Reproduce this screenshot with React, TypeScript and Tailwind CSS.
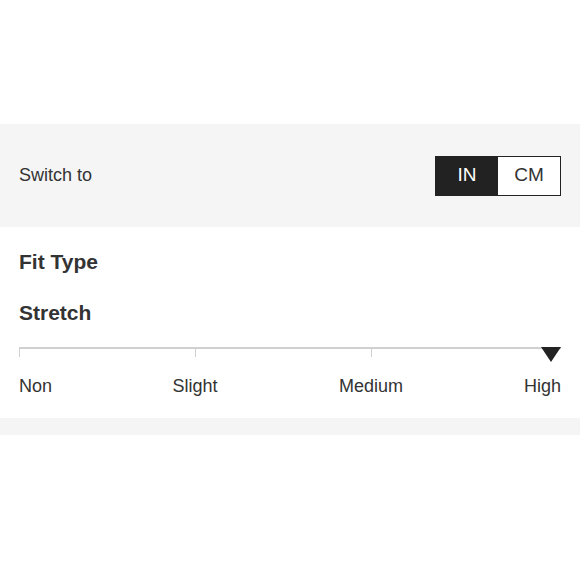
import React from "react";

export default function App() {
  return (
    <div className="w-[580px] h-[580px] bg-white text-[#333] overflow-hidden" style={{ fontFamily: '"Liberation Sans", Arial, sans-serif' }}>
      <div className="h-[124px]" />
      <div className="h-[103px] bg-[#f5f5f5] flex items-center justify-between px-[19px]">
        <span className="text-[18px]">Switch to</span>
        <div className="flex h-[40px] border-[1.5px] border-[#222]">
          <div className="w-[62px] bg-[#222] text-white flex items-center justify-center text-[19px]">IN</div>
          <div className="w-[62px] bg-white text-[#333] flex items-center justify-center text-[19px]">CM</div>
        </div>
      </div>
      <div className="h-[191px] px-[19px] pt-[22px] flex flex-col">
        <div className="text-[21px] font-bold leading-[26px]">Fit Type</div>
        <div className="text-[21px] font-bold leading-[26px] mt-[25px]">Stretch</div>
        <div className="relative mt-[21px] flex h-[10px]">
          <div className="w-[176px] border-t-2 border-l-[1.5px] border-[#d0d0d0]" />
          <div className="w-[176px] border-t-2 border-l-[1.5px] border-[#d0d0d0]" />
          <div className="flex-1 border-t-2 border-l-[1.5px] border-[#d0d0d0]" />
          <svg className="absolute right-0 top-0" width="20" height="15" viewBox="0 0 20 15">
            <polygon points="0,0 20,0 10,15" fill="#222" />
          </svg>
        </div>
        <div className="grid grid-cols-[176px_176px_1fr] mt-[16px] text-[18px] leading-[26px]">
          <span>Non</span>
          <span className="-translate-x-1/2 justify-self-start">Slight</span>
          <div className="flex justify-between">
            <span className="-translate-x-1/2">Medium</span>
            <span>High</span>
          </div>
        </div>
      </div>
      <div className="h-[17px] bg-[#f5f5f5]" />
    </div>
  );
}
